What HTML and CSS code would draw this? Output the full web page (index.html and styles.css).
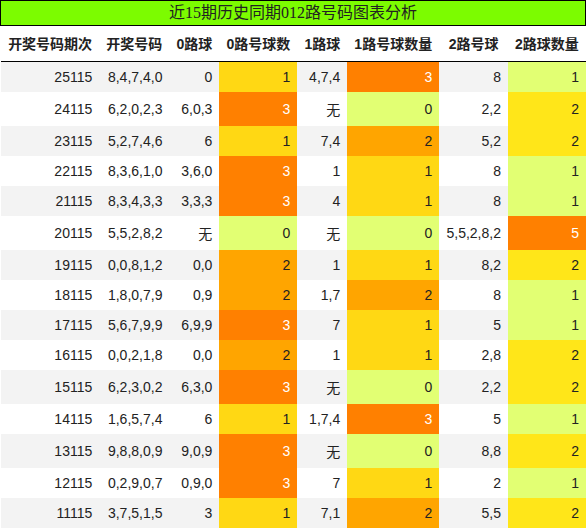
FILE: index.html
```html
<!DOCTYPE html>
<html lang="zh-CN">
<head>
    <meta charset="UTF-8">
    <title>近15期历史同期012路号码图表分析</title>
    <link rel="stylesheet" href="styles.css">
</head>
<body>
    <div class="title">近15期历史同期012路号码图表分析</div>
    <table class="chart">
        <thead>
            <tr>
                <th>开奖号码期次</th>
                <th>开奖号码</th>
                <th>0路球</th>
                <th>0路号球数</th>
                <th>1路球</th>
                <th>1路号球数量</th>
                <th>2路号球</th>
                <th>2路球数量</th>
            </tr>
        </thead>
        <tbody>
            <tr><td>25115</td><td>8,4,7,4,0</td><td>0</td><td class="c1">1</td><td>4,7,4</td><td class="c3">3</td><td>8</td><td class="c0">1</td></tr>
            <tr><td>24115</td><td>6,2,0,2,3</td><td>6,0,3</td><td class="c3">3</td><td>无</td><td class="c0">0</td><td>2,2</td><td class="y">2</td></tr>
            <tr><td>23115</td><td>5,2,7,4,6</td><td>6</td><td class="c1">1</td><td>7,4</td><td class="c2">2</td><td>5,2</td><td class="y">2</td></tr>
            <tr><td>22115</td><td>8,3,6,1,0</td><td>3,6,0</td><td class="c3">3</td><td>1</td><td class="c1">1</td><td>8</td><td class="c0">1</td></tr>
            <tr><td>21115</td><td>8,3,4,3,3</td><td>3,3,3</td><td class="c3">3</td><td>4</td><td class="c1">1</td><td>8</td><td class="c0">1</td></tr>
            <tr><td>20115</td><td>5,5,2,8,2</td><td>无</td><td class="c0">0</td><td>无</td><td class="c0">0</td><td>5,5,2,8,2</td><td class="c3">5</td></tr>
            <tr><td>19115</td><td>0,0,8,1,2</td><td>0,0</td><td class="c2">2</td><td>1</td><td class="c1">1</td><td>8,2</td><td class="y">2</td></tr>
            <tr><td>18115</td><td>1,8,0,7,9</td><td>0,9</td><td class="c2">2</td><td>1,7</td><td class="c2">2</td><td>8</td><td class="c0">1</td></tr>
            <tr><td>17115</td><td>5,6,7,9,9</td><td>6,9,9</td><td class="c3">3</td><td>7</td><td class="c1">1</td><td>5</td><td class="c0">1</td></tr>
            <tr><td>16115</td><td>0,0,2,1,8</td><td>0,0</td><td class="c2">2</td><td>1</td><td class="c1">1</td><td>2,8</td><td class="y">2</td></tr>
            <tr><td>15115</td><td>6,2,3,0,2</td><td>6,3,0</td><td class="c3">3</td><td>无</td><td class="c0">0</td><td>2,2</td><td class="y">2</td></tr>
            <tr><td>14115</td><td>1,6,5,7,4</td><td>6</td><td class="c1">1</td><td>1,7,4</td><td class="c3">3</td><td>5</td><td class="c0">1</td></tr>
            <tr><td>13115</td><td>9,8,8,0,9</td><td>9,0,9</td><td class="c3">3</td><td>无</td><td class="c0">0</td><td>8,8</td><td class="y">2</td></tr>
            <tr><td>12115</td><td>0,2,9,0,7</td><td>0,9,0</td><td class="c3">3</td><td>7</td><td class="c1">1</td><td>2</td><td class="c0">1</td></tr>
            <tr><td>11115</td><td>3,7,5,1,5</td><td>3</td><td class="c1">1</td><td>7,1</td><td class="c2">2</td><td>5,5</td><td class="y">2</td></tr>
        </tbody>
    </table>
</body>
</html>
```

FILE: styles.css
```css
body {
    margin: 0;
    background: #fff;
    color: #222;
    font-family: "Liberation Sans", "Noto Sans CJK SC", sans-serif;
    font-size: 14px;
}
.title {
    background: #7cfc00;
    border: 1px solid #000;
    text-align: center;
    font-family: "Liberation Serif", "Noto Sans CJK SC", serif;
    font-size: 16px;
    line-height: 24px;
}
.chart {
    width: calc(100% - 1px);
    margin-left: 1px;
    border-collapse: collapse;
}
.chart th {
    padding: 7px 7px 8px;
    font-weight: bold;
    text-align: center;
    white-space: nowrap;
    border-bottom: 1px solid #000;
}
.chart td {
    padding: 7px;
    text-align: right;
    white-space: nowrap;
}
.chart tbody tr:nth-child(odd) {
    background: #f3f3f3;
}
.c0 {
    background: #e2ff73;
}
.c1 {
    background: #ffd814;
}
.c2 {
    background: #ffa500;
}
.c3 {
    background: #ff8000;
    color: #fff;
}
.y {
    background: #ffe619;
}
```
